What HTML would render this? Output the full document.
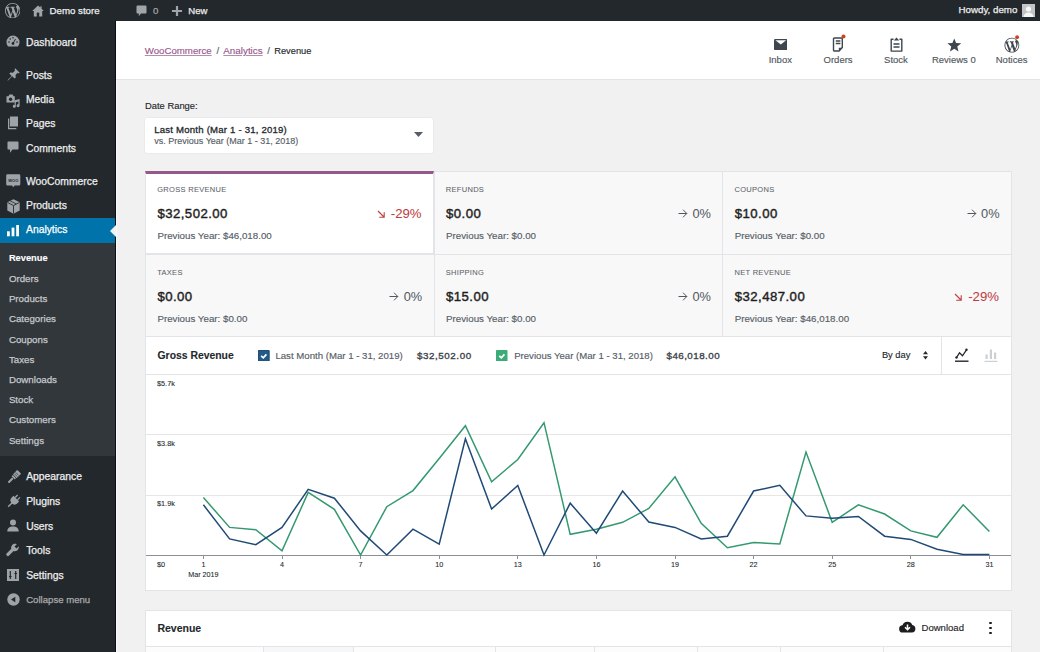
<!DOCTYPE html>
<html><head><meta charset="utf-8"><title>Analytics - Revenue</title>
<style>
html,body{margin:0;padding:0;}
body{width:1040px;height:652px;overflow:hidden;position:relative;background:#f1f1f1;font-family:"Liberation Sans",sans-serif;}
.t{position:absolute;line-height:1;white-space:nowrap;}
.r{position:absolute;}
.lk{color:#96588a;text-decoration:underline;text-decoration-color:#b98aae;text-underline-offset:0.6px;text-decoration-thickness:0.8px;}
</style></head><body>
<div class="r" style="left:0px;top:0px;width:1040px;height:21px;background:#23282d;"></div>
<div class="r" style="left:0px;top:21px;width:116px;height:631px;background:#23282d;"></div>
<div class="r" style="left:0px;top:243px;width:116px;height:212.5px;background:#32373c;"></div>
<div class="r" style="left:0px;top:218px;width:116px;height:25px;background:#0073aa;"></div>
<div class="r" style="left:114.6px;top:21px;width:1px;height:631px;background:#0c0f12;"></div>
<div class="r" style="left:115.6px;top:79px;width:1px;height:573px;background:#fbfbfb;"></div>
<div class="r" style="left:116px;top:21px;width:924px;height:58px;background:#fff;border-bottom:1px solid #e2e4e7;"></div>
<svg class="r" style="left:4.8px;top:2.6px" width="15.4" height="15.4" viewBox="0 0 20 20"><path fill="#a0a5aa" d="M20 10c0-5.51-4.49-10-10-10C4.48 0 0 4.49 0 10c0 5.52 4.48 10 10 10 5.51 0 10-4.48 10-10zM7.78 15.37L4.37 6.22c.55-.02 1.17-.08 1.17-.08.5-.06.44-1.13-.06-1.11 0 0-1.450.11-2.37.11-.18 0-.37 0-.58-.01C4.120 2.690 6.870 1.110 10 1.110c2.330 0 4.450.87 6.050 2.340-.68-.11-1.650.39-1.650 1.580 0 .74.45 1.360.9 2.100.35.61.55 1.360.55 2.460 0 1.490-1.400 5-1.400 5l-3.030-8.370c.54-.02.82-.17.82-.17.5-.05.44-1.250-.06-1.220 0 0-1.440.12-2.380.12-.87 0-2.330-.12-2.330-.12-.5-.03-.56 1.200-.06 1.220l.92.08 1.260 3.410zM17.410 10c.24-.64.74-1.870.43-4.250.7 1.290 1.050 2.710 1.050 4.250 0 3.290-1.730 6.240-4.400 7.780.97-2.590 1.940-5.200 2.920-7.780zM6.100 18.090C3.120 16.650 1.110 13.530 1.110 10c0-1.300.23-2.480.72-3.590C3.250 10.300 4.670 14.200 6.100 18.090zm4.030-6.630l2.580 6.980c-.86.29-1.760.45-2.710.45-.79 0-1.570-.11-2.290-.33.81-2.380 1.620-4.740 2.420-7.100z"/></svg>
<svg class="r" style="left:32px;top:4.5px" width="12" height="12" viewBox="0 0 12 12"><path fill="#a0a5aa" d="M6 0.6L0.2 6h1.6v5.6h3V8h2.4v3.6h3V6h1.6L9.6 3.7V1.2H8.4v1.4z"/><rect x="4.9" y="7.6" width="2.2" height="2.2" fill="#23282d"/></svg>
<div class="t" style="left:49.50px;top:5.59px;font-size:9.7px;color:#eee;font-weight:400;-webkit-text-stroke:0.25px currentColor;">Demo store</div>
<svg class="r" style="left:135.5px;top:4.5px" width="11" height="12" viewBox="0 0 11 12"><path fill="#a0a5aa" d="M1.5 0.5h8a1 1 0 0 1 1 1v6a1 1 0 0 1-1 1H5L2.8 11.3V8.5H1.5a1 1 0 0 1-1-1v-6a1 1 0 0 1 1-1z"/></svg>
<div class="t" style="left:153.00px;top:5.59px;font-size:9.7px;color:#a0a5aa;font-weight:400;-webkit-text-stroke:0.25px currentColor;">0</div>
<svg class="r" style="left:172px;top:5.5px" width="10" height="10" viewBox="0 0 10 10"><path fill="#a0a5aa" d="M3.9 0h2.2v3.9H10v2.2H6.1V10H3.9V6.1H0V3.9h3.9z"/></svg>
<div class="t" style="left:188.30px;top:5.67px;font-size:9.6px;color:#eee;font-weight:400;-webkit-text-stroke:0.25px currentColor;">New</div>
<div class="t" style="right:22.60px;text-align:right;top:5.25px;font-size:9.75px;color:#eee;font-weight:400;-webkit-text-stroke:0.25px currentColor;">Howdy, demo</div>
<svg class="r" style="left:1022px;top:4px" width="13" height="13" viewBox="0 0 13 13"><rect width="13" height="13" fill="#c3c4c7"/><circle cx="6.5" cy="5" r="2.6" fill="#f6f7f7"/><path d="M1.5 13c0.3-3 2.3-4.5 5-4.5s4.7 1.5 5 4.5z" fill="#f6f7f7"/></svg>
<div class="t" style="left:26.00px;top:38.04px;font-size:10.35px;color:#eee;font-weight:400;-webkit-text-stroke:0.25px currentColor;">Dashboard</div>
<div class="t" style="left:26.00px;top:70.64px;font-size:10.35px;color:#eee;font-weight:400;-webkit-text-stroke:0.25px currentColor;">Posts</div>
<div class="t" style="left:26.00px;top:95.04px;font-size:10.35px;color:#eee;font-weight:400;-webkit-text-stroke:0.25px currentColor;">Media</div>
<div class="t" style="left:26.00px;top:119.24px;font-size:10.35px;color:#eee;font-weight:400;-webkit-text-stroke:0.25px currentColor;">Pages</div>
<div class="t" style="left:26.00px;top:143.64px;font-size:10.35px;color:#eee;font-weight:400;-webkit-text-stroke:0.25px currentColor;">Comments</div>
<div class="t" style="left:26.00px;top:176.54px;font-size:10.35px;color:#eee;font-weight:400;-webkit-text-stroke:0.25px currentColor;">WooCommerce</div>
<div class="t" style="left:26.00px;top:200.84px;font-size:10.35px;color:#eee;font-weight:400;-webkit-text-stroke:0.25px currentColor;">Products</div>
<div class="t" style="left:26.00px;top:225.34px;font-size:10.35px;color:#fff;font-weight:400;-webkit-text-stroke:0.25px currentColor;">Analytics</div>
<div class="t" style="left:8.90px;top:253.73px;font-size:9.3px;color:#fff;font-weight:700;-webkit-text-stroke:0.1px currentColor;">Revenue</div>
<div class="t" style="left:8.90px;top:274.06px;font-size:9.73px;color:#c4c8cb;font-weight:400;-webkit-text-stroke:0.25px currentColor;">Orders</div>
<div class="t" style="left:8.90px;top:294.26px;font-size:9.73px;color:#c4c8cb;font-weight:400;-webkit-text-stroke:0.25px currentColor;">Products</div>
<div class="t" style="left:8.90px;top:314.36px;font-size:9.73px;color:#c4c8cb;font-weight:400;-webkit-text-stroke:0.25px currentColor;">Categories</div>
<div class="t" style="left:8.90px;top:334.56px;font-size:9.73px;color:#c4c8cb;font-weight:400;-webkit-text-stroke:0.25px currentColor;">Coupons</div>
<div class="t" style="left:8.90px;top:354.76px;font-size:9.73px;color:#c4c8cb;font-weight:400;-webkit-text-stroke:0.25px currentColor;">Taxes</div>
<div class="t" style="left:8.90px;top:374.96px;font-size:9.73px;color:#c4c8cb;font-weight:400;-webkit-text-stroke:0.25px currentColor;">Downloads</div>
<div class="t" style="left:8.90px;top:395.16px;font-size:9.73px;color:#c4c8cb;font-weight:400;-webkit-text-stroke:0.25px currentColor;">Stock</div>
<div class="t" style="left:8.90px;top:415.36px;font-size:9.73px;color:#c4c8cb;font-weight:400;-webkit-text-stroke:0.25px currentColor;">Customers</div>
<div class="t" style="left:8.90px;top:435.76px;font-size:9.73px;color:#c4c8cb;font-weight:400;-webkit-text-stroke:0.25px currentColor;">Settings</div>
<div class="t" style="left:26.20px;top:472.44px;font-size:10.35px;color:#eee;font-weight:400;-webkit-text-stroke:0.25px currentColor;">Appearance</div>
<div class="t" style="left:26.20px;top:497.14px;font-size:10.35px;color:#eee;font-weight:400;-webkit-text-stroke:0.25px currentColor;">Plugins</div>
<div class="t" style="left:26.20px;top:521.84px;font-size:10.35px;color:#eee;font-weight:400;-webkit-text-stroke:0.25px currentColor;">Users</div>
<div class="t" style="left:26.20px;top:546.44px;font-size:10.35px;color:#eee;font-weight:400;-webkit-text-stroke:0.25px currentColor;">Tools</div>
<div class="t" style="left:26.20px;top:570.64px;font-size:10.35px;color:#eee;font-weight:400;-webkit-text-stroke:0.25px currentColor;">Settings</div>
<div class="t" style="left:26.20px;top:594.87px;font-size:9.6px;color:#aaa;font-weight:400;-webkit-text-stroke:0.25px currentColor;">Collapse menu</div>
<svg class="r" style="left:110px;top:225px" width="6" height="12" viewBox="0 0 6 12"><path d="M6 0v12L0 6z" fill="#f1f1f1"/></svg>
<svg class="r" style="left:6px;top:35px" width="14" height="12" viewBox="0 0 14 12"><path fill="#9ea3a8" d="M7 0.5A6.5 6.5 0 0 0 0.5 7c0 1.7.6 3.2 1.6 4.4h9.8c1-1.2 1.6-2.7 1.6-4.4A6.5 6.5 0 0 0 7 0.5z"/><circle cx="7" cy="8.5" r="1.4" fill="#23282d"/><path d="M7 8.5L9.5 4" stroke="#23282d" stroke-width="1"/><circle cx="3" cy="7" r=".8" fill="#23282d"/><circle cx="4.2" cy="4" r=".8" fill="#23282d"/><circle cx="7" cy="2.8" r=".8" fill="#23282d"/><circle cx="11" cy="7" r=".8" fill="#23282d"/></svg>
<svg class="r" style="left:6.5px;top:68px" width="13" height="13" viewBox="0 0 13 13"><path fill="#9ea3a8" d="M8.2 0.3l4.5 4.5-1 .6-1-.6-2.2 2.2.3 2.4-1.2 1.2-2.4-2.4L1 12.5l-.6-.2 4.3-4.3-2.4-2.4 1.2-1.2 2.4.3 2.2-2.2-.6-1z"/></svg>
<svg class="r" style="left:6px;top:93.5px" width="14" height="14" viewBox="0 0 14 14"><path fill="#9ea3a8" d="M0.5 2.2h2l.9-1.6h3.2l.9 1.6h1.3v6.3H0.5z"/><circle cx="4.6" cy="5.2" r="1.7" fill="#23282d"/><path fill="#9ea3a8" d="M8.6 6.3l5-1.2v6.6a1.5 1.5 0 1 1-1.2-1.5V7.6l-2.6.6v4.2a1.5 1.5 0 1 1-1.2-1.5z"/></svg>
<svg class="r" style="left:7px;top:116px" width="12" height="14" viewBox="0 0 12 14"><path fill="#9ea3a8" d="M3 0.5h8v10H3z"/><path fill="#9ea3a8" d="M1 2.5h1.3v9.5h7v1.3H1z"/></svg>
<svg class="r" style="left:7px;top:141px" width="12" height="13" viewBox="0 0 12 13"><path fill="#9ea3a8" d="M1.2 0.5h9.6a.7.7 0 0 1 .7.7v6.6a.7.7 0 0 1-.7.7H5.5L3 11.8V8.5H1.2a.7.7 0 0 1-.7-.7V1.2a.7.7 0 0 1 .7-.7z"/></svg>
<svg class="r" style="left:6px;top:174px" width="14.5" height="14" viewBox="0 0 14.5 14"><path fill="#9ea3a8" d="M1.5 0.3h11.5a1.3 1.3 0 0 1 1.3 1.3v8.6a1.3 1.3 0 0 1-1.3 1.3H8.6L7.2 13.2 6 11.5H1.5A1.3 1.3 0 0 1 .2 10.2V1.6A1.3 1.3 0 0 1 1.5.3z"/><text x="7.25" y="7.6" font-size="4" font-family="Liberation Sans" font-weight="700" text-anchor="middle" fill="#23282d">WOO</text></svg>
<svg class="r" style="left:6.5px;top:198.5px" width="13" height="15" viewBox="0 0 13 15"><path fill="#9ea3a8" d="M6.5 0.3L12.7 3.3v8.2L6.5 14.7 .3 11.5V3.3z"/><path d="M.6 3.5L6.5 6.5l5.9-3M6.5 6.5v8" stroke="#23282d" stroke-width=".9" fill="none"/><path d="M3.2 1.9l6 3" stroke="#23282d" stroke-width=".8"/></svg>
<svg class="r" style="left:7px;top:225px" width="12" height="12" viewBox="0 0 12 12"><rect x="0" y="6.3" width="2.8" height="5" fill="#fff"/><rect x="4.6" y="2.6" width="2.8" height="8.7" fill="#fff"/><rect x="9.2" y="0" width="2.8" height="11.3" fill="#fff"/></svg>
<svg class="r" style="left:5.5px;top:469.5px" width="15" height="15" viewBox="0 0 15 15"><g transform="rotate(45 7.5 7.5)" fill="#9ea3a8"><rect x="4.8" y="-0.5" width="5.4" height="6.2" rx="0.6"/><rect x="5.3" y="6.2" width="4.4" height="1.8"/><rect x="6.5" y="8.3" width="2" height="6.5" rx="1"/></g><path d="M8.3 3.6l3 3M9.6 2.4l3 3" stroke="#23282d" stroke-width="0.6"/></svg>
<svg class="r" style="left:5.5px;top:494px" width="15" height="15" viewBox="0 0 15 15"><g transform="rotate(45 7.5 7.5)" fill="#9ea3a8"><rect x="5.2" y="0" width="1.3" height="3.5"/><rect x="8.5" y="0" width="1.3" height="3.5"/><path d="M3.5 3.5h8v2.5a4 4 0 0 1-8 0z"/><rect x="6.8" y="9" width="1.4" height="6"/></g></svg>
<svg class="r" style="left:7px;top:519px" width="12" height="13" viewBox="0 0 12 13"><circle cx="6" cy="3.5" r="3" fill="#9ea3a8"/><path fill="#9ea3a8" d="M0.3 12.5c0-3.2 2-5 5.7-5s5.7 1.8 5.7 5z"/></svg>
<svg class="r" style="left:6px;top:543px" width="14" height="14" viewBox="0 0 14 14"><path fill="#9ea3a8" d="M12.8 3.2l-2.3 2.3-2-2L10.8 1.2C9.3.4 7.3.8 6.2 2 5.2 3 4.9 4.5 5.3 5.8L.8 10.3a1.6 1.6 0 0 0 2.3 2.3L7.6 8.1c1.3.4 2.8.1 3.8-.9 1.2-1.1 1.6-3.1 1.4-4z"/></svg>
<svg class="r" style="left:7px;top:568.5px" width="12" height="12" viewBox="0 0 12 12"><rect width="12" height="12" fill="#9ea3a8"/><path d="M3.3 2v8M2 7.5h2.6M8.7 2v8M7.4 4.5H10" stroke="#23282d" stroke-width="1.2"/></svg>
<svg class="r" style="left:6.5px;top:593px" width="13" height="13" viewBox="0 0 13 13"><circle cx="6.5" cy="6.5" r="6.2" fill="#9ea3a8"/><path d="M4 6.5L8.3 3.8v5.4z" fill="#23282d"/></svg>
<div class="t" style="left:144.80px;top:46.42px;font-size:9.66px;color:#96588a;font-weight:400;-webkit-text-stroke:0.14px currentColor;"><span class="lk">WooCommerce</span></div>
<div class="t" style="left:216.60px;top:46.47px;font-size:9.6px;color:#555d66;font-weight:400;-webkit-text-stroke:0.14px currentColor;">/</div>
<div class="t" style="left:223.30px;top:46.27px;font-size:9.84px;color:#96588a;font-weight:400;-webkit-text-stroke:0.14px currentColor;"><span class="lk">Analytics</span></div>
<div class="t" style="left:267.20px;top:46.47px;font-size:9.6px;color:#555d66;font-weight:400;-webkit-text-stroke:0.14px currentColor;">/</div>
<div class="t" style="left:274.20px;top:46.73px;font-size:9.3px;color:#23282d;font-weight:400;-webkit-text-stroke:0.14px currentColor;">Revenue</div>
<svg class="r" style="left:773.5px;top:38.8px" width="13.6" height="11.2" viewBox="0 0 13.6 11.2"><rect x="0" y="0" width="13.6" height="11.2" rx="1.3" fill="#3f464d"/><path d="M1.4 1.3h10.8L6.8 5.6z" fill="#fff"/></svg>
<div class="t" style="left:680.30px;width:200px;text-align:center;top:54.56px;font-size:9.5px;color:#50575e;font-weight:400;-webkit-text-stroke:0.14px currentColor;">Inbox</div>
<svg class="r" style="left:831.5px;top:34px" width="15" height="18.5" viewBox="0 0 15 18.5"><path d="M2.5 4h6.8a1 1 0 0 1 1 1v8.6l-3.2 3.4H2.5a1 1 0 0 1-1-1V5a1 1 0 0 1 1-1z" fill="none" stroke="#3f464d" stroke-width="1.4" stroke-linejoin="round"/><path d="M3.8 7h4.6M3.8 9.5h4.6" stroke="#3f464d" stroke-width="1.3"/><path d="M6.8 17v-3.3h3.5z" fill="#3f464d"/><circle cx="11.5" cy="2.6" r="2" fill="#d0421b"/></svg>
<div class="t" style="left:738.10px;width:200px;text-align:center;top:54.56px;font-size:9.5px;color:#50575e;font-weight:400;-webkit-text-stroke:0.14px currentColor;">Orders</div>
<svg class="r" style="left:889.5px;top:37px" width="13" height="15" viewBox="0 0 13 15"><path d="M3.5 2.3H1.2v11.8h10.6V2.3H9.5" fill="none" stroke="#3f464d" stroke-width="1.4" stroke-linejoin="round"/><path d="M6.5.4L9.3 3.5H3.7z" fill="#3f464d"/><path d="M3.5 7h6M3.5 10h6" stroke="#3f464d" stroke-width="1.3"/></svg>
<div class="t" style="left:796.00px;width:200px;text-align:center;top:54.56px;font-size:9.5px;color:#50575e;font-weight:400;-webkit-text-stroke:0.14px currentColor;">Stock</div>
<svg class="r" style="left:946.5px;top:37.5px" width="14.5" height="14" viewBox="0 0 24 23"><path fill="#3f464d" d="M12 .6l3.1 7.6 8.2.6-6.3 5.3 2 8L12 17.8l-7 4.3 2-8L.7 8.8l8.2-.6z"/></svg>
<div class="t" style="left:853.90px;width:200px;text-align:center;top:54.56px;font-size:9.5px;color:#50575e;font-weight:400;-webkit-text-stroke:0.14px currentColor;">Reviews 0</div>
<svg class="r" style="left:1003.5px;top:34.5px" width="18" height="18" viewBox="0 0 18 18"><g transform="translate(0.5,2.8) scale(0.74)"><path fill="#3f464d" d="M20 10c0-5.51-4.49-10-10-10C4.48 0 0 4.49 0 10c0 5.52 4.48 10 10 10 5.51 0 10-4.48 10-10zM7.78 15.37L4.37 6.22c.55-.02 1.17-.08 1.17-.08.5-.06.44-1.13-.06-1.11 0 0-1.450.11-2.37.11-.18 0-.37 0-.58-.01C4.120 2.690 6.870 1.110 10 1.110c2.330 0 4.450.87 6.050 2.340-.68-.11-1.650.39-1.650 1.580 0 .74.45 1.360.9 2.100.35.61.55 1.360.55 2.460 0 1.490-1.400 5-1.400 5l-3.030-8.370c.54-.02.82-.17.82-.17.5-.05.44-1.250-.06-1.220 0 0-1.440.12-2.380.12-.87 0-2.330-.12-2.330-.12-.5-.03-.56 1.200-.06 1.220l.92.08 1.260 3.410zM17.410 10c.24-.64.74-1.870.43-4.250.7 1.290 1.050 2.710 1.050 4.250 0 3.290-1.730 6.240-4.400 7.780.97-2.590 1.940-5.200 2.920-7.780zM6.100 18.090C3.120 16.650 1.110 13.530 1.110 10c0-1.300.23-2.480.72-3.590C3.250 10.300 4.670 14.200 6.100 18.090zm4.030-6.630l2.580 6.980c-.86.29-1.760.45-2.710.45-.79 0-1.570-.11-2.290-.33.81-2.380 1.620-4.740 2.420-7.100z"/></g><circle cx="13.1" cy="2.2" r="1.9" fill="#d0421b"/></svg>
<div class="t" style="left:911.60px;width:200px;text-align:center;top:54.56px;font-size:9.5px;color:#50575e;font-weight:400;-webkit-text-stroke:0.14px currentColor;">Notices</div>
<div class="t" style="left:145.00px;top:101.24px;font-size:9.4px;color:#23282d;font-weight:400;-webkit-text-stroke:0.14px currentColor;">Date Range:</div>
<div class="r" style="left:145px;top:118px;width:288px;height:34.5px;background:#fff;border-radius:2px;box-shadow:0 0 0 0.5px #e2e4e7;"></div>
<div class="t" style="left:154.30px;top:124.67px;font-size:9.6px;color:#23282d;font-weight:400;-webkit-text-stroke:0.14px currentColor;-webkit-text-stroke:0.3px currentColor;letter-spacing:0.2px;">Last Month (Mar 1 - 31, 2019)</div>
<div class="t" style="left:154.30px;top:137.48px;font-size:9.0px;color:#555d66;font-weight:400;-webkit-text-stroke:0.14px currentColor;">vs. Previous Year (Mar 1 - 31, 2018)</div>
<svg class="r" style="left:414px;top:132px" width="9" height="5" viewBox="0 0 9 5"><path d="M0 0h9L4.5 5z" fill="#555d66"/></svg>
<div class="r" style="left:145px;top:171px;width:867px;height:166px;background:#f8f8f8;box-sizing:border-box;border:1px solid #e2e4e7;"></div>
<div class="r" style="left:145px;top:171px;width:289px;height:83px;background:#fff;box-sizing:border-box;border:1px solid #e2e4e7;border-top:3px solid #96588a;"></div>
<div class="r" style="left:433.6px;top:171px;width:1px;height:166px;background:#e2e4e7;"></div>
<div class="r" style="left:722.3px;top:171px;width:1px;height:166px;background:#e2e4e7;"></div>
<div class="r" style="left:145px;top:253.5px;width:867px;height:1px;background:#e2e4e7;"></div>
<div class="t" style="left:157.20px;top:186.25px;font-size:7.5px;color:#5c636a;font-weight:400;-webkit-text-stroke:0.08px currentColor;letter-spacing:0.3px;-webkit-text-stroke:0.05px currentColor;">GROSS REVENUE</div>
<div class="t" style="left:157.40px;top:207.02px;font-size:13.2px;color:#1e1e1e;font-weight:400;-webkit-text-stroke:0.14px currentColor;-webkit-text-stroke:0.4px currentColor;letter-spacing:0.45px;">$32,502.00</div>
<div class="t" style="left:157.40px;top:230.85px;font-size:9.75px;color:#555d66;font-weight:400;-webkit-text-stroke:0.14px currentColor;">Previous Year: $46,018.00</div>
<div class="t" style="right:618.40px;text-align:right;top:207.32px;font-size:13.2px;color:#bf3e41;font-weight:400;-webkit-text-stroke:0.14px currentColor;-webkit-text-stroke:0.05px currentColor;">-29%</div>
<svg class="r" style="left:376.80px;top:209.8px" width="8.5" height="8.5" viewBox="0 0 8.5 8.5"><path d="M1 1l6 6M7.2 2.2v5H2.2" stroke="#bf3e41" stroke-width="1.1" fill="none"/></svg>
<div class="t" style="left:445.80px;top:186.25px;font-size:7.5px;color:#5c636a;font-weight:400;-webkit-text-stroke:0.08px currentColor;letter-spacing:0.3px;-webkit-text-stroke:0.05px currentColor;">REFUNDS</div>
<div class="t" style="left:446.00px;top:207.02px;font-size:13.2px;color:#1e1e1e;font-weight:400;-webkit-text-stroke:0.14px currentColor;-webkit-text-stroke:0.4px currentColor;letter-spacing:0.45px;">$0.00</div>
<div class="t" style="left:446.00px;top:230.85px;font-size:9.75px;color:#555d66;font-weight:400;-webkit-text-stroke:0.14px currentColor;">Previous Year: $0.00</div>
<div class="t" style="right:329.10px;text-align:right;top:208.26px;font-size:12.8px;color:#50575e;font-weight:400;-webkit-text-stroke:0.14px currentColor;-webkit-text-stroke:0;">0%</div>
<svg class="r" style="left:678.10px;top:209.2px" width="10" height="9" viewBox="0 0 10 9"><path d="M0.5 4.5h8.3M5 .7L8.8 4.5 5 8.3" stroke="#50575e" stroke-width="1" fill="none"/></svg>
<div class="t" style="left:734.50px;top:186.25px;font-size:7.5px;color:#5c636a;font-weight:400;-webkit-text-stroke:0.08px currentColor;letter-spacing:0.3px;-webkit-text-stroke:0.05px currentColor;">COUPONS</div>
<div class="t" style="left:734.70px;top:207.02px;font-size:13.2px;color:#1e1e1e;font-weight:400;-webkit-text-stroke:0.14px currentColor;-webkit-text-stroke:0.4px currentColor;letter-spacing:0.45px;">$10.00</div>
<div class="t" style="left:734.70px;top:230.85px;font-size:9.75px;color:#555d66;font-weight:400;-webkit-text-stroke:0.14px currentColor;">Previous Year: $0.00</div>
<div class="t" style="right:40.40px;text-align:right;top:208.26px;font-size:12.8px;color:#50575e;font-weight:400;-webkit-text-stroke:0.14px currentColor;-webkit-text-stroke:0;">0%</div>
<svg class="r" style="left:966.80px;top:209.2px" width="10" height="9" viewBox="0 0 10 9"><path d="M0.5 4.5h8.3M5 .7L8.8 4.5 5 8.3" stroke="#50575e" stroke-width="1" fill="none"/></svg>
<div class="t" style="left:157.20px;top:269.25px;font-size:7.5px;color:#5c636a;font-weight:400;-webkit-text-stroke:0.08px currentColor;letter-spacing:0.3px;-webkit-text-stroke:0.05px currentColor;">TAXES</div>
<div class="t" style="left:157.40px;top:290.02px;font-size:13.2px;color:#1e1e1e;font-weight:400;-webkit-text-stroke:0.14px currentColor;-webkit-text-stroke:0.4px currentColor;letter-spacing:0.45px;">$0.00</div>
<div class="t" style="left:157.40px;top:313.85px;font-size:9.75px;color:#555d66;font-weight:400;-webkit-text-stroke:0.14px currentColor;">Previous Year: $0.00</div>
<div class="t" style="right:617.80px;text-align:right;top:291.26px;font-size:12.8px;color:#50575e;font-weight:400;-webkit-text-stroke:0.14px currentColor;-webkit-text-stroke:0;">0%</div>
<svg class="r" style="left:389.40px;top:292.2px" width="10" height="9" viewBox="0 0 10 9"><path d="M0.5 4.5h8.3M5 .7L8.8 4.5 5 8.3" stroke="#50575e" stroke-width="1" fill="none"/></svg>
<div class="t" style="left:445.80px;top:269.25px;font-size:7.5px;color:#5c636a;font-weight:400;-webkit-text-stroke:0.08px currentColor;letter-spacing:0.3px;-webkit-text-stroke:0.05px currentColor;">SHIPPING</div>
<div class="t" style="left:446.00px;top:290.02px;font-size:13.2px;color:#1e1e1e;font-weight:400;-webkit-text-stroke:0.14px currentColor;-webkit-text-stroke:0.4px currentColor;letter-spacing:0.45px;">$15.00</div>
<div class="t" style="left:446.00px;top:313.85px;font-size:9.75px;color:#555d66;font-weight:400;-webkit-text-stroke:0.14px currentColor;">Previous Year: $0.00</div>
<div class="t" style="right:329.10px;text-align:right;top:291.26px;font-size:12.8px;color:#50575e;font-weight:400;-webkit-text-stroke:0.14px currentColor;-webkit-text-stroke:0;">0%</div>
<svg class="r" style="left:678.10px;top:292.2px" width="10" height="9" viewBox="0 0 10 9"><path d="M0.5 4.5h8.3M5 .7L8.8 4.5 5 8.3" stroke="#50575e" stroke-width="1" fill="none"/></svg>
<div class="t" style="left:734.50px;top:269.25px;font-size:7.5px;color:#5c636a;font-weight:400;-webkit-text-stroke:0.08px currentColor;letter-spacing:0.3px;-webkit-text-stroke:0.05px currentColor;">NET REVENUE</div>
<div class="t" style="left:734.70px;top:290.02px;font-size:13.2px;color:#1e1e1e;font-weight:400;-webkit-text-stroke:0.14px currentColor;-webkit-text-stroke:0.4px currentColor;letter-spacing:0.45px;">$32,487.00</div>
<div class="t" style="left:734.70px;top:313.85px;font-size:9.75px;color:#555d66;font-weight:400;-webkit-text-stroke:0.14px currentColor;">Previous Year: $46,018.00</div>
<div class="t" style="right:41.00px;text-align:right;top:290.32px;font-size:13.2px;color:#bf3e41;font-weight:400;-webkit-text-stroke:0.14px currentColor;-webkit-text-stroke:0.05px currentColor;">-29%</div>
<svg class="r" style="left:954.20px;top:292.8px" width="8.5" height="8.5" viewBox="0 0 8.5 8.5"><path d="M1 1l6 6M7.2 2.2v5H2.2" stroke="#bf3e41" stroke-width="1.1" fill="none"/></svg>
<div class="r" style="left:145px;top:337px;width:867px;height:254px;background:#fff;box-sizing:border-box;border:1px solid #e2e4e7;border-top:none;"></div>
<div class="r" style="left:145px;top:373.5px;width:867px;height:1px;background:#e2e4e7;"></div>
<div class="t" style="left:157.50px;top:351.00px;font-size:10.4px;color:#23282d;font-weight:700;-webkit-text-stroke:0.1px currentColor;">Gross Revenue</div>
<svg class="r" style="left:258px;top:349.5px" width="11.5" height="11.5" viewBox="0 0 12 12"><rect width="12" height="12" rx="0.8" fill="#235a87"/><rect x="0.4" y="0.4" width="11.2" height="11.2" rx="0.6" fill="none" stroke="#1b4a70" stroke-width="0.8"/><path d="M3.3 6.2l2.2 2 3.3-3.6" stroke="#fff" stroke-width="1.8" fill="none"/></svg>
<div class="t" style="left:275.40px;top:350.63px;font-size:9.65px;color:#555d66;font-weight:400;-webkit-text-stroke:0.14px currentColor;">Last Month (Mar 1 - 31, 2019)</div>
<div class="t" style="left:417.10px;top:350.90px;font-size:9.8px;color:#3c434a;font-weight:400;-webkit-text-stroke:0.14px currentColor;-webkit-text-stroke:0.35px currentColor;letter-spacing:0.55px;">$32,502.00</div>
<svg class="r" style="left:496.3px;top:349.5px" width="11.5" height="11.5" viewBox="0 0 12 12"><rect width="12" height="12" rx="0.8" fill="#3bac78"/><path d="M3.3 6.2l2.2 2 3.3-3.6" stroke="#fff" stroke-width="1.8" fill="none"/></svg>
<div class="t" style="left:514.20px;top:350.67px;font-size:9.6px;color:#555d66;font-weight:400;-webkit-text-stroke:0.14px currentColor;">Previous Year (Mar 1 - 31, 2018)</div>
<div class="t" style="left:666.50px;top:350.90px;font-size:9.8px;color:#3c434a;font-weight:400;-webkit-text-stroke:0.14px currentColor;-webkit-text-stroke:0.35px currentColor;letter-spacing:0.45px;">$46,018.00</div>
<div class="t" style="left:881.90px;top:351.13px;font-size:9.3px;color:#23282d;font-weight:400;-webkit-text-stroke:0.14px currentColor;">By day</div>
<svg class="r" style="left:922.5px;top:351px" width="5" height="8.5" viewBox="0 0 5 8.5"><path d="M2.5 0L5 3.2H0zM2.5 8.5L5 5.3H0z" fill="#23282d"/></svg>
<div class="r" style="left:941px;top:337px;width:1px;height:37px;background:#e2e4e7;"></div>
<svg class="r" style="left:955px;top:348px" width="14" height="15" viewBox="0 0 14 15"><path d="M1.5 9.5L4.5 4.8 7.5 7.8 11.5 1.8" stroke="#23282d" stroke-width="1.3" fill="none"/><circle cx="1.5" cy="9.5" r="1.2" fill="#23282d"/><circle cx="11.5" cy="1.8" r="1.2" fill="#23282d"/><rect x="0" y="12.5" width="13.5" height="1.4" fill="#23282d"/></svg>
<svg class="r" style="left:984px;top:348px" width="14" height="15" viewBox="0 0 14 15"><rect x="1.5" y="6.5" width="2.2" height="4.5" fill="#ccd0d4"/><rect x="5.8" y="1.5" width="2.2" height="9.5" fill="#ccd0d4"/><rect x="10" y="4.5" width="2.2" height="6.5" fill="#ccd0d4"/><rect x="0.5" y="12.8" width="13" height="1.2" fill="#ccd0d4"/></svg>
<div class="r" style="left:146px;top:434px;width:865px;height:1px;background:#e6e6e6;"></div>
<div class="r" style="left:146px;top:494.6px;width:865px;height:1px;background:#e6e6e6;"></div>
<div class="r" style="left:146px;top:554.6px;width:865px;height:1.1px;background:#8c8f94;"></div>
<div class="t" style="left:157.00px;top:379.52px;font-size:7.3px;color:#23282d;font-weight:400;-webkit-text-stroke:0.08px currentColor;">$5.7k</div>
<div class="t" style="left:157.00px;top:439.62px;font-size:7.3px;color:#23282d;font-weight:400;-webkit-text-stroke:0.08px currentColor;">$3.8k</div>
<div class="t" style="left:157.00px;top:500.32px;font-size:7.3px;color:#23282d;font-weight:400;-webkit-text-stroke:0.08px currentColor;">$1.9k</div>
<div class="t" style="left:157.00px;top:560.82px;font-size:7.3px;color:#23282d;font-weight:400;-webkit-text-stroke:0.08px currentColor;">$0</div>
<div class="r" style="left:202.9px;top:555px;width:1px;height:3.5px;background:#8a9096;"></div>
<div class="t" style="left:103.40px;width:200px;text-align:center;top:560.90px;font-size:7.2px;color:#23282d;font-weight:400;-webkit-text-stroke:0.08px currentColor;">1</div>
<div class="r" style="left:281.5px;top:555px;width:1px;height:3.5px;background:#8a9096;"></div>
<div class="t" style="left:182.00px;width:200px;text-align:center;top:560.90px;font-size:7.2px;color:#23282d;font-weight:400;-webkit-text-stroke:0.08px currentColor;">4</div>
<div class="r" style="left:360.1px;top:555px;width:1px;height:3.5px;background:#8a9096;"></div>
<div class="t" style="left:260.60px;width:200px;text-align:center;top:560.90px;font-size:7.2px;color:#23282d;font-weight:400;-webkit-text-stroke:0.08px currentColor;">7</div>
<div class="r" style="left:438.7px;top:555px;width:1px;height:3.5px;background:#8a9096;"></div>
<div class="t" style="left:339.20px;width:200px;text-align:center;top:560.90px;font-size:7.2px;color:#23282d;font-weight:400;-webkit-text-stroke:0.08px currentColor;">10</div>
<div class="r" style="left:517.3px;top:555px;width:1px;height:3.5px;background:#8a9096;"></div>
<div class="t" style="left:417.80px;width:200px;text-align:center;top:560.90px;font-size:7.2px;color:#23282d;font-weight:400;-webkit-text-stroke:0.08px currentColor;">13</div>
<div class="r" style="left:595.9px;top:555px;width:1px;height:3.5px;background:#8a9096;"></div>
<div class="t" style="left:496.40px;width:200px;text-align:center;top:560.90px;font-size:7.2px;color:#23282d;font-weight:400;-webkit-text-stroke:0.08px currentColor;">16</div>
<div class="r" style="left:674.5px;top:555px;width:1px;height:3.5px;background:#8a9096;"></div>
<div class="t" style="left:575.00px;width:200px;text-align:center;top:560.90px;font-size:7.2px;color:#23282d;font-weight:400;-webkit-text-stroke:0.08px currentColor;">19</div>
<div class="r" style="left:753.0999999999999px;top:555px;width:1px;height:3.5px;background:#8a9096;"></div>
<div class="t" style="left:653.60px;width:200px;text-align:center;top:560.90px;font-size:7.2px;color:#23282d;font-weight:400;-webkit-text-stroke:0.08px currentColor;">22</div>
<div class="r" style="left:831.6999999999999px;top:555px;width:1px;height:3.5px;background:#8a9096;"></div>
<div class="t" style="left:732.20px;width:200px;text-align:center;top:560.90px;font-size:7.2px;color:#23282d;font-weight:400;-webkit-text-stroke:0.08px currentColor;">25</div>
<div class="r" style="left:910.3px;top:555px;width:1px;height:3.5px;background:#8a9096;"></div>
<div class="t" style="left:810.80px;width:200px;text-align:center;top:560.90px;font-size:7.2px;color:#23282d;font-weight:400;-webkit-text-stroke:0.08px currentColor;">28</div>
<div class="r" style="left:988.9px;top:555px;width:1px;height:3.5px;background:#8a9096;"></div>
<div class="t" style="left:889.40px;width:200px;text-align:center;top:560.90px;font-size:7.2px;color:#23282d;font-weight:400;-webkit-text-stroke:0.08px currentColor;">31</div>
<div class="t" style="left:103.40px;width:200px;text-align:center;top:570.60px;font-size:7.2px;color:#23282d;font-weight:400;-webkit-text-stroke:0.08px currentColor;">Mar 2019</div>
<svg class="r" style="left:0;top:0" width="1040" height="652"><polyline points="203.4,497.5 229.6,527.4 255.8,529.7 282.0,550.9 308.2,492.4 334.4,509.4 360.6,555.0 386.8,506.7 413.0,490.6 439.2,458.6 465.4,425.7 491.6,481.8 517.8,459.5 544.0,422.7 570.2,534.3 596.4,529.2 622.6,522.3 648.8,508.5 675.0,476.8 701.2,523.3 727.4,547.7 753.6,542.4 779.8,544.0 806.0,452.1 832.2,522.3 858.4,504.8 884.6,514.0 910.8,530.9 937.0,537.3 963.2,504.8 989.4,531.5" fill="none" stroke="#34996f" stroke-width="1.5" stroke-linejoin="miter"/><polyline points="203.4,504.8 229.6,538.9 255.8,544.7 282.0,527.4 308.2,489.4 334.4,498.2 360.6,530.9 386.8,555.0 413.0,529.2 439.2,544.2 465.4,438.8 491.6,509.0 517.8,485.5 544.0,555.0 570.2,503.2 596.4,533.2 622.6,491.0 648.8,522.1 675.0,527.4 701.2,538.9 727.4,536.2 753.6,491.0 779.8,485.3 806.0,515.9 832.2,518.2 858.4,516.4 884.6,536.2 910.8,539.4 937.0,549.3 963.2,554.6 989.4,554.6" fill="none" stroke="#1f4a77" stroke-width="1.5" stroke-linejoin="miter"/></svg>
<div class="r" style="left:145px;top:609.5px;width:867px;height:60px;background:#fff;box-sizing:border-box;border:1px solid #e2e4e7;"></div>
<div class="r" style="left:146px;top:645.5px;width:865px;height:7px;background:#fcfcfc;border-top:1px solid #e2e4e7;"></div>
<div class="r" style="left:263px;top:646.5px;width:90px;height:6px;background:#f5f7f9;"></div>
<div class="r" style="left:262.5px;top:646.5px;width:1px;height:6px;background:#e2e4e7;"></div>
<div class="r" style="left:352.6px;top:646.5px;width:1px;height:6px;background:#e2e4e7;"></div>
<div class="r" style="left:494.5px;top:646.5px;width:1px;height:6px;background:#e2e4e7;"></div>
<div class="r" style="left:594px;top:646.5px;width:1px;height:6px;background:#e2e4e7;"></div>
<div class="r" style="left:697px;top:646.5px;width:1px;height:6px;background:#e2e4e7;"></div>
<div class="r" style="left:780px;top:646.5px;width:1px;height:6px;background:#e2e4e7;"></div>
<div class="r" style="left:883px;top:646.5px;width:1px;height:6px;background:#e2e4e7;"></div>
<div class="t" style="left:157.40px;top:623.11px;font-size:10.5px;color:#23282d;font-weight:700;-webkit-text-stroke:0.1px currentColor;">Revenue</div>
<svg class="r" style="left:898.5px;top:620.5px" width="17" height="12" viewBox="0 0 17 12"><path fill="#1e1e1e" d="M4 11.5a3.6 3.6 0 0 1-.5-7.2A5.2 5.2 0 0 1 13.3 4a3.8 3.8 0 0 1-.3 7.5z"/><path d="M8.5 3.5v5M6 6.3l2.5 2.5 2.5-2.5" stroke="#fff" stroke-width="1.5" fill="none"/></svg>
<div class="t" style="left:921.50px;top:623.41px;font-size:9.55px;color:#1e1e1e;font-weight:400;-webkit-text-stroke:0.14px currentColor;">Download</div>
<div class="r" style="left:989.4px;top:621.5px;width:2.6px;height:2.6px;border-radius:50%;background:#1e1e1e"></div>
<div class="r" style="left:989.4px;top:626.5px;width:2.6px;height:2.6px;border-radius:50%;background:#1e1e1e"></div>
<div class="r" style="left:989.4px;top:631.5px;width:2.6px;height:2.6px;border-radius:50%;background:#1e1e1e"></div>
</body></html>
